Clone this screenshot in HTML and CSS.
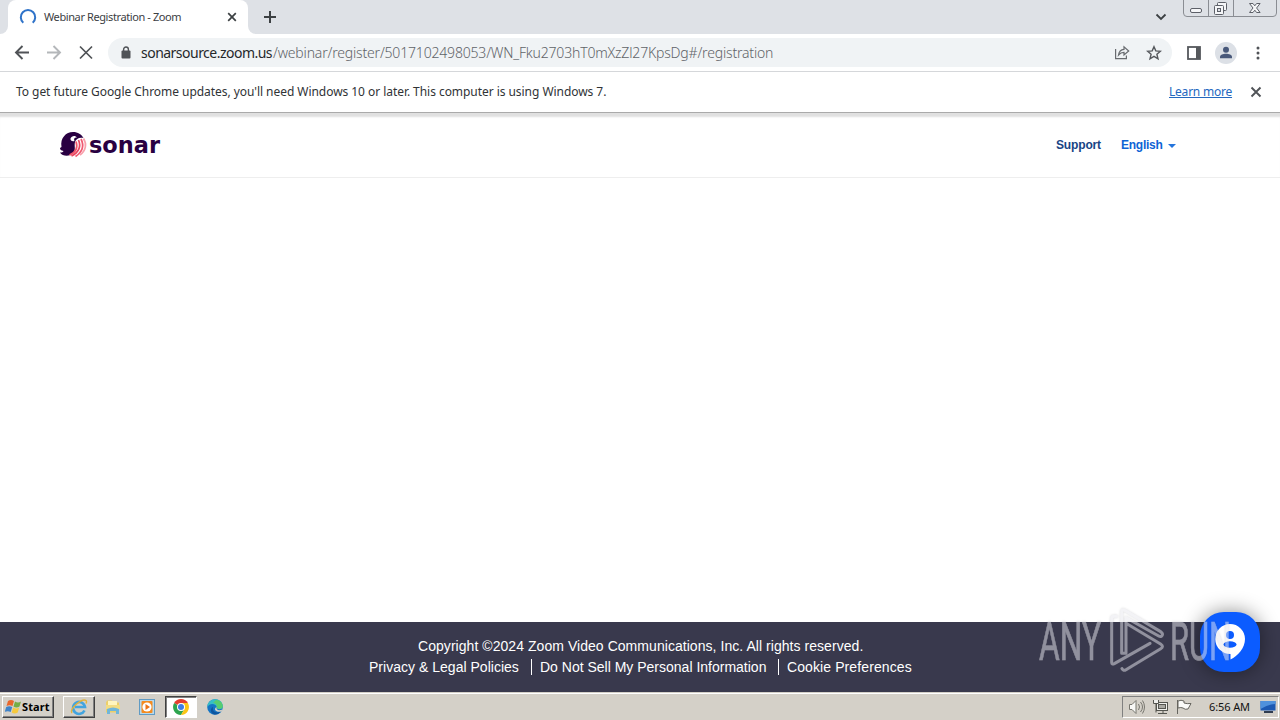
FILE: index.html
```html
<!DOCTYPE html>
<html lang="en">
<head>
<meta charset="utf-8">
<title>Webinar Registration - Zoom</title>
<link rel="stylesheet" href="styles.css">
</head>
<body>
<div class="screen">
  <header class="tabstrip">
    <div class="edge"></div>
    <div class="tab">
      <svg class="spinner" width="18" height="18" viewBox="0 0 18 18"><path d="M4.3 14.7A7.2 7.2 0 1 1 13.7 14.7" fill="none" stroke="#2f73c9" stroke-width="2"/></svg>
      <span class="tab-title">Webinar Registration - Zoom</span>
      <svg class="tab-close" width="10" height="10" viewBox="0 0 10 10"><path d="M1.2 1.2l7.6 7.6M8.8 1.2L1.2 8.8" stroke="#3c4043" stroke-width="1.7"/></svg>
    </div>
    <div class="strip-rest">
      <svg class="plus" width="14" height="14" viewBox="0 0 14 14"><path d="M7 1v12M1 7h12" stroke="#3c4043" stroke-width="2"/></svg>
      <svg class="chevron" width="12" height="8" viewBox="0 0 12 8"><path d="M1.5 1.5L6 6l4.500-4.500" fill="none" stroke="#3c4043" stroke-width="1.8"/></svg>
      <svg class="winbuttons" width="94" height="18" viewBox="0 0 94 18">
        <path d="M.5 0v13q0 3.500 3.500 3.500h86q3.500 0 3.500-3.500V0M25.500 0v16M50.500 0v16" fill="none" stroke="#8a8d93"/>
        <rect x="7.500" y="8.500" width="11" height="4" rx="1.500" fill="#f5f6f8" stroke="#5d6068"/>
        <rect x="34.500" y="2.500" width="9" height="8" rx="1" fill="#f5f6f8" stroke="#5d6068"/>
        <rect x="31.500" y="5.500" width="9" height="9" rx="1" fill="#f5f6f8" stroke="#5d6068"/>
        <rect x="34.500" y="8.500" width="3" height="3" fill="#dee1e6" stroke="#5d6068"/>
        <path d="M66.500 3.500h3.500l1.800 2.300 1.800-2.300h3.500l-3.500 4.500 3.500 4.500h-3.500l-1.800-2.300-1.800 2.300h-3.500l3.500-4.500z" fill="#f5f6f8" stroke="#5d6068"/>
      </svg>
    </div>
  </header>

  <div class="toolbar">
    <svg class="nav" width="92" height="20" viewBox="0 0 92 20" fill="none" stroke-width="1.9">
      <path d="M15 9.500H2.500M8.500 3L2 9.500l6.500 6.500" stroke="#505357"/>
      <path d="M33 9.500h12.500M39.500 3L46 9.500l-6.500 6.500" stroke="#b4b7ba"/>
      <path d="M66 3.500l12 12M78 3.500l-12 12" stroke="#505357" stroke-width="1.700"/>
    </svg>
    <div class="omnibox">
      <svg class="lock" width="10" height="13" viewBox="0 0 10 13"><rect x=".5" y="4.500" width="9" height="8" rx="1" fill="#505357"/><path d="M2.600 5V3.400a2.400 2.400 0 0 1 4.800 0V5" fill="none" stroke="#505357" stroke-width="1.400"/></svg>
      <span class="host">sonarsource.zoom.us</span><span class="path">/webinar/register/5017102498053/WN_Fku2703hT0mXzZl27KpsDg#/registration</span>
      <svg class="share" width="16" height="15" viewBox="0 0 16 15" fill="none" stroke="#686b6f" stroke-width="1.200"><path d="M1.600 4v9.700h10.800V10.500"/><path d="M4.500 10c.5-3.700 2.500-5.300 5.500-5.600V1.800L14.700 6 10 10V7.400C7.500 7.400 6 8.200 4.500 10z"/></svg>
      <svg class="star" width="16" height="16" viewBox="0 0 16 16"><path d="M8 1.700l1.800 4.200 4.600.4-3.500 3 1.100 4.500L8 11.400l-4 2.400 1.100-4.500-3.500-3 4.600-.4z" fill="none" stroke="#55585c" stroke-width="1.400"/></svg>
    </div>
    <svg class="panel" width="14" height="14" viewBox="0 0 14 14"><rect x="1" y="1" width="12" height="12" fill="none" stroke="#55585c" stroke-width="1.800"/><path d="M9 1h4v12H9z" fill="#55585c"/></svg>
    <svg class="profile" width="22" height="22" viewBox="0 0 22 22"><circle cx="11" cy="11" r="11" fill="#dce0e6"/><circle cx="11" cy="7.800" r="3" fill="#48587a"/><path d="M5 16.300v-1.500c0-4.200 12-4.200 12 0v1.500z" fill="#48587a"/></svg>
    <svg class="dots" width="4" height="14" viewBox="0 0 4 14" fill="#505357"><circle cx="2" cy="2" r="1.500"/><circle cx="2" cy="7" r="1.500"/><circle cx="2" cy="12" r="1.500"/></svg>
  </div>

  <div class="infobar">
    <span class="notice">To get future Google Chrome updates, you'll need Windows 10 or later. This computer is using Windows 7.</span>
    <a class="learn">Learn more</a>
    <svg width="12" height="12" viewBox="0 0 12 12"><path d="M1.500 1.500l9 9M10.500 1.500l-9 9" stroke="#505357" stroke-width="1.900"/></svg>
  </div>

  <div class="site-header">
    <svg class="logo" width="104" height="30" viewBox="0 0 104 30">
      <path d="M2.500 17C1 8 7 2 14 2c5 0 8.500 2.500 10.500 6C20 7 17 9 16 12c-1 4 1 8-1.500 11-4 4-11 3.500-13.500-.5 2 0 3-.5 3.500-1.500C2 20.500 1 19.500 1 18z" fill="#290042"/>
      <path d="M11.500 8.500c1-3 5-3.500 6.500-1-2.500-.5-3.500 1.500-2.500 3.500-2 1-4.500-.5-4-2.500z" fill="#fff"/>
      <g fill="none" stroke-width="1.700"><path d="M24.500 8.500c3.500 5.500 2.500 12-3.500 16.500" stroke="#f8a0ac"/><path d="M22 9c3 6 2 12.500-5.500 17.500" stroke="#f05a72"/><path d="M19.500 10c2.500 6 .5 12-7 16" stroke="#e94560"/><path d="M17 11.500c2 6-.5 11-6.500 13.500" stroke="#f2566b"/></g>
      <text class="wordmark" x="30" y="23" textLength="71" lengthAdjust="spacingAndGlyphs">sonar</text>
    </svg>
    <a class="support">Support</a>
    <a class="language">English</a>
    <span class="caret"></span>
  </div>

  <main class="content"></main>

  <footer class="site-footer">
    <div class="copyright">Copyright ©2024 Zoom Video Communications, Inc. All rights reserved.</div>
    <div class="legal"><a class="privacy">Privacy &amp; Legal Policies</a><a class="dns">Do Not Sell My Personal Information</a><a class="cookies">Cookie Preferences</a></div>
  </footer>

  <div class="taskbar">
    <div class="start">
      <svg width="17" height="16" viewBox="0 0 17 16"><path d="M3 2q3-2 6 0L7.500 7q-3-1.500-6 0z" fill="#e9672b"/><path d="M10 2.500q3 2 6 0L14.500 7.500q-3 2-6 0z" fill="#75ad45"/><path d="M1.200 8q3-1.500 6 0L5.700 13q-3-1.500-6 0z" fill="#3f83c8"/><path d="M8.200 8.500q3 2 6 0L12.700 13.500q-3 2-6 0z" fill="#f6c93d"/></svg>
      <span class="start-label">Start</span>
    </div>
    <div class="task ie"><svg width="18" height="18" viewBox="0 0 18 18"><path d="M14.500 12.500A6 6 0 1 1 15 9H5" fill="none" stroke="#42a4df" stroke-width="2.600"/><path d="M2 15C-1 11 12 0 16 2.500q1 1 0 3" fill="none" stroke="#e3b33a" stroke-width="1.400"/></svg></div>
    <svg class="folder" width="16" height="16" viewBox="0 0 16 16"><path d="M1 3.500l1-2h5l1 2h6v10H1z" fill="#edcf68"/><path d="M3 2h9v5H3z" fill="#fff5bf"/><path d="M1 6h14v4H1z" fill="#f2dc83"/><path d="M2 15V10q6-3 12 0v5h-3v-3H5v3z" fill="#71b6d9"/></svg>
    <svg class="media" width="16" height="16" viewBox="0 0 16 16"><rect x=".5" y=".5" width="15" height="15" fill="#b8d9ec" stroke="#609bc4"/><rect x="2.500" y="2" width="11" height="12" rx="1" fill="#f48b20"/><circle cx="8" cy="8" r="4.600" fill="#fff"/><path d="M6.500 5l4.500 3-4.500 3z" fill="#ec7316"/></svg>
    <div class="task active"><svg width="16" height="16" viewBox="0 0 16 16"><path d="M8 8L1.100 4A8 8 0 0 1 14.900 4z" fill="#e33e2f"/><path d="M8 8L1.100 4A8 8 0 0 0 8 16l3.500-6z" fill="#2da44e"/><path d="M8 4h6.900A8 8 0 0 1 8 16l3.500-6z" fill="#fbc516"/><circle cx="8" cy="8" r="4" fill="#fff"/><circle cx="8" cy="8" r="3" fill="#3d7de5"/></svg></div>
    <svg class="edge-icon" width="16" height="16" viewBox="0 0 16 16"><circle cx="8" cy="8" r="7.800" fill="#1474c4"/><path d="M.3 8C1-2 15-2 15.800 7c0 4-6 4-6 1.500C10 5 3 3 .3 8z" fill="#36bfc5"/><path d="M9 1c5 0 7 4 6.800 7-.8 2.500-6 2.500-6 .3C10 5 8 4 6 4z" fill="#57cc70"/><path d="M6 8c-1 5 4 7 8 4-1 2-4 4-7 3.500C3 14 3 9 6 8z" fill="#0d559f"/><path d="M9.500 8c-.5 3 2 4 6 2.500l-1 2C9 14 6 10 9.500 8z" fill="#d4d0c8"/></svg>
    <div class="tray">
      <svg class="tray-icons" width="68" height="18" viewBox="0 0 68 18">
        <g fill="#f8f8f6" stroke="#77766f"><path d="M.5 6.500H3l4-4v13l-4-4H.5z"/><path d="M9.500 6q2 3 0 6M11.500 4q4 5 0 10M13.500 2.500q4 6.500 0 13" fill="none"/></g>
        <g fill="#efefec" stroke="#55554f"><rect x="27.500" y="4.500" width="11" height="8"/><rect x="29.500" y="6.500" width="7" height="4" fill="#aaa9a3"/><path d="M24.500 2v3.500h5V2M27 5.500v9M29 15.500h9M34 12.500v3"/></g>
        <path d="M48.500 2v14M49 3q3-1.500 6 0v2q3 1 7 .5L59 11q-3 1-5-1-2-1-5 0z" fill="#fafaf8" stroke="#66655f"/>
      </svg>
      <span class="clock">6:56 AM</span>
      <svg class="desktop" width="16" height="14" viewBox="0 0 16 14"><path d="M.5 1h15v9.500H.5z" fill="#1c59b2"/><path d="M.5 1h15v3q-7 0-15 5z" fill="#4f91dc"/><path d="M4 12h9" stroke="#303d50" stroke-width="2"/></svg>
    </div>
  </div>

  <div class="assistant"><svg width="32" height="38" viewBox="0 0 32 38"><path d="M16 1a15 15 0 0 1 15 15c0 9-7 17-14.500 20.500V31A15 15 0 0 1 16 1z" fill="#fff"/><circle cx="16" cy="12" r="4" fill="#0b5cff"/><ellipse cx="16" cy="21.500" rx="6.500" ry="3.300" fill="#0b5cff"/></svg></div>
  <svg class="watermark" width="204" height="70" viewBox="0 0 204 70">
    <g class="watermark-mark" transform="translate(64 -7) scale(.3333)" fill="none" stroke-linejoin="round" stroke-linecap="round">
      <path d="M50 49H42q-7 0-7 8V187q0 8 8 4L150 130M65 160V35q0-9 9-4L182 95q10 7 2 14-3 2-8-1L78 53V160H65M66 206q4 8 12 3L182 146q10-6 1-13L78 70"/>
    </g>
    <g class="watermark-text"><text x="3" y="52.500" textLength="62" lengthAdjust="spacingAndGlyphs">ANY</text><text x="134" y="52.500" textLength="61" lengthAdjust="spacingAndGlyphs">RUN</text></g>
  </svg>
</div>
</body>
</html>
```
FILE: styles.css
```css
* { box-sizing: border-box; }
body { margin: 0; overflow: hidden; font-family: "Noto Sans", sans-serif; }
svg { display: block; flex: none; }
.screen { position: relative; width: 1280px; height: 720px; display: flex; flex-direction: column; background: #fff; overflow: hidden; white-space: nowrap; }
.tabstrip { height: 34px; flex: none; display: flex; background: #fff; }
.edge { width: 8px; background: #dee1e6; border-bottom-right-radius: 8px; }
.tab { width: 240px; display: flex; align-items: center; padding-left: 11px; background: #fff; border-radius: 8px 8px 0 0; box-shadow: 0 -10px 0 #dee1e6; }
.tab-title { width: 138px; margin-left: 7px; padding-bottom: 2px; font-size: 11px; letter-spacing: -.4px; color: #3c4043; }
.tab-close { margin-left: 45px; }
.strip-rest { flex: 1; display: flex; background: #dee1e6; border-bottom-left-radius: 8px; }
.plus { margin: 10px 0 0 15px; }
.chevron { margin: 13px 16px 0 auto; }
.winbuttons { margin-right: 3px; }
.toolbar { height: 38px; flex: none; display: flex; align-items: center; border-bottom: 1px solid #d5d7da; }
.nav { margin-left: 14px; }
.omnibox { width: 1064px; height: 29px; margin-left: 2px; padding-left: 13px; display: flex; align-items: center; background: #f0f3f5; border-radius: 15px; font-size: 14px; }
.host { width: 132px; margin-left: 10px; color: #25282b; letter-spacing: -.52px; }
.path { color: #5f6368; letter-spacing: -.18px; font-weight: 300; }
.share { margin-left: auto; }
.star { margin: 0 10px 0 16px; }
.panel { margin-left: 15px; }
.profile { margin-left: 14px; }
.dots { margin-left: 19px; }
.infobar { height: 41px; flex: none; display: flex; align-items: center; padding: 0 18px 1px 16px; font-size: 12px; color: #303336; border-bottom: 1px solid #aaa; }
.notice { letter-spacing: -.05px; }
.learn { width: 63px; margin: 0 18px 0 auto; letter-spacing: -.22px; color: #2468bf; text-decoration: underline; }
.site-header { height: 65px; flex: none; display: flex; align-items: center; padding: 0 104px 1px 59px; border-bottom: 1px solid #eee; box-shadow: inset 0 5px 2px -1px #e0e0e0; font: bold 12px "Liberation Sans", Arial, sans-serif; }
.logo { overflow: visible; }
.wordmark { font: bold 23.5px "DejaVu Sans", sans-serif; fill: #290042; }
.support { width: 45px; margin-left: auto; letter-spacing: -.15px; color: #174485; }
.language { width: 42px; margin-left: 20px; letter-spacing: -.25px; color: #0e63d5; }
.caret { margin: 2px 0 0 5px; border: 4px solid transparent; border-bottom: 0; border-top-color: #2474dc; }
.content { flex: 1; }
.site-footer { height: 70px; flex: none; display: flex; flex-direction: column; align-items: center; padding-top: 14px; background: #39394d; color: #fff; font: 14px/21px "Liberation Sans", Arial, sans-serif; }
.copyright { width: 444px; letter-spacing: .05px; }
.legal { display: flex; align-items: center; padding: 2px 0 0 1px; }
.legal a { line-height: 16px; }
.legal a + a { padding-left: 8px; border-left: 1px solid #fff; }
.privacy { width: 162px; letter-spacing: .02px; }
.dns { width: 247px; }
.cookies { width: 134px; letter-spacing: .1px; }
.taskbar { height: 28px; flex: none; display: flex; align-items: center; background: #d4d0c8; border-top: 1px solid #d4d0c8; box-shadow: inset 0 1px 0 #fff; padding: 0 1px 0 2px; }
.start { width: 52px; height: 22px; display: flex; align-items: center; padding-left: 2px; border: 1px solid; border-color: #fff #404040 #404040 #fff; box-shadow: inset -1px -1px #808080; font-size: 11px; font-weight: bold; }
.start-label { width: 30px; letter-spacing: .1px; }
.task { width: 32px; height: 22px; display: flex; justify-content: center; align-items: center; border: 1px solid; border-color: #fff #404040 #404040 #fff; box-shadow: inset -1px -1px #808080; }
.ie { margin-left: 9px; }
.folder { margin-left: 10px; }
.media { margin-left: 18px; }
.active { margin-left: 10px; background: #fff; border-color: #404040 #fff #fff #404040; box-shadow: inset 1px 1px #808080; }
.edge-icon { margin-left: 10px; }
.tray { width: 157px; height: 22px; margin-left: auto; display: flex; align-items: center; padding-left: 6px; border: 1px solid; border-color: #808080 #fff #fff #808080; }
.clock { width: 42px; margin-left: 12px; font-size: 11px; letter-spacing: -.1px; color: #111; }
.desktop { margin-left: 9px; }
.assistant { position: absolute; left: 1200px; top: 612px; width: 60px; height: 60px; padding: 11px 0 0 14px; border-radius: 24px; background: #0b5cff; box-shadow: 0 0 20px rgba(0,0,0,.45); }
.watermark { position: absolute; left: 1036px; top: 607px; opacity: .5; filter: drop-shadow(0 0 1px rgba(80,80,90,.4)); }
.watermark-mark { stroke: #e8e8ee; stroke-width: 9; }
.watermark-text { font: 400 53px Roboto, sans-serif; fill: #e8e8ee; stroke: #e8e8ee; stroke-width: .7; }
```
